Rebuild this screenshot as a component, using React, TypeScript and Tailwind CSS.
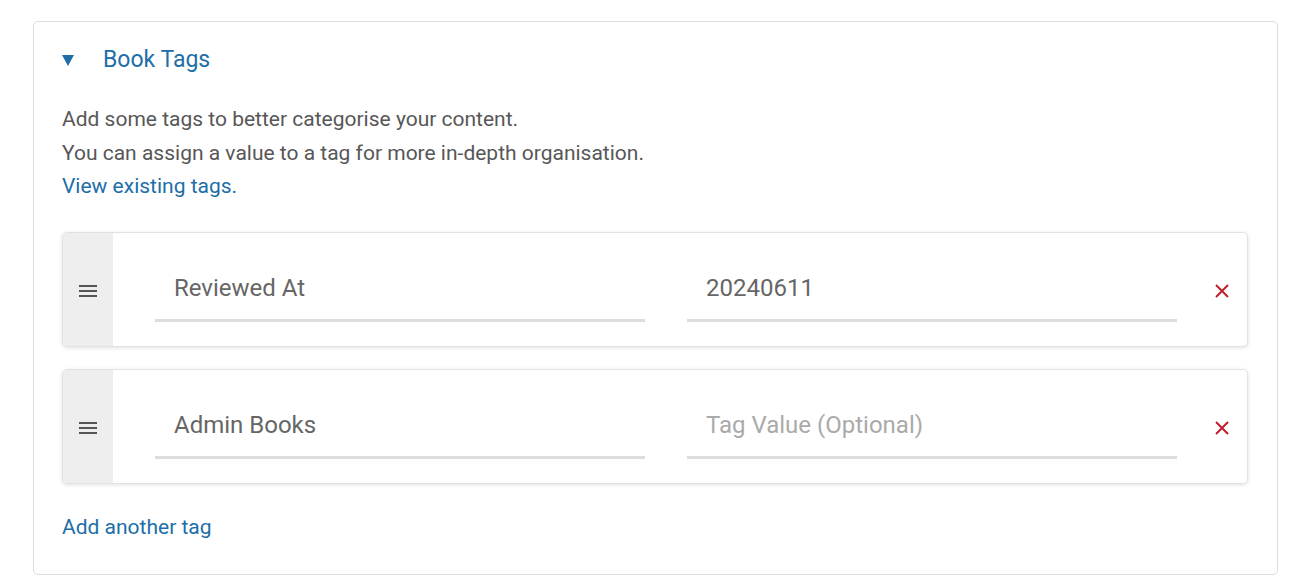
const tags = [
  { name: 'Reviewed At', value: '20240611' },
  { name: 'Admin Books', value: '' },
]

function DragHandle() {
  return (
    <svg width="18" height="12" viewBox="0 0 18 12" className="text-[#555]" aria-hidden>
      <rect x="0" y="0" width="18" height="2" fill="currentColor" />
      <rect x="0" y="5" width="18" height="2" fill="currentColor" />
      <rect x="0" y="10" width="18" height="2" fill="currentColor" />
    </svg>
  )
}

function RemoveIcon() {
  return (
    <svg width="14" height="14" viewBox="0 0 14 14" aria-hidden>
      <path d="M1 1 L13 13 M13 1 L1 13" stroke="#c0202a" strokeWidth="2" />
    </svg>
  )
}

function TagRow({ name, value }: { name: string; value: string }) {
  return (
    <div className="flex h-[115px] overflow-hidden rounded-[5px] border border-[#e2e2e2] bg-white shadow-[0_1px_4px_rgba(0,0,0,0.12)]">
      <div className="flex w-[50px] shrink-0 items-center justify-center bg-[#eeeeee] pt-[4px]">
        <DragHandle />
      </div>
      <div className="flex flex-1 items-start gap-[42px] pl-[42px] pr-[70px] pt-[37px]">
        <div className="flex-1 border-b-[3px] border-[#dddddd] pb-[13px] pl-[19px] text-[24px] leading-[36px] text-[#666]">
          {name}
        </div>
        <div className={`flex-1 border-b-[3px] border-[#dddddd] pb-[13px] pl-[19px] text-[24px] leading-[36px] ${value ? 'text-[#666]' : 'text-[#aaa]'}`}>
          {value || 'Tag Value (Optional)'}
        </div>
      </div>
    </div>
  )
}

export default function App() {
  return (
    <div className="min-h-[588px] bg-white pl-[33px] pt-[21px] font-['Roboto',sans-serif]">
      <div className="w-[1245px] rounded-[5px] border border-[#dcdcdc] pb-[31px] pl-[28px] pr-[29px] pt-[21px]">
        <div className="flex items-center text-[23px] leading-[34px] text-[#206ea7]">
          <span className="flex w-[41px]">
            <svg width="12" height="11" viewBox="0 0 12 11" aria-hidden>
              <path d="M0 0 H12 L6 11 Z" fill="#206ea7" />
            </svg>
          </span>
          <span>Book Tags</span>
        </div>

        <div className="mt-[26px] text-[21px] leading-[33.5px] text-[#575757]">
          <p>Add some tags to better categorise your content.</p>
          <p>You can assign a value to a tag for more in-depth organisation.</p>
          <a href="#" className="text-[#206ea7]">View existing tags.</a>
        </div>

        <div className="mt-[28px] flex flex-col gap-[22px]">
          {tags.map((tag) => (
            <div key={tag.name} className="relative">
              <TagRow name={tag.name} value={tag.value} />
              <div className="absolute right-[19px] top-[52px]">
                <RemoveIcon />
              </div>
            </div>
          ))}
        </div>

        <a href="#" className="mt-[27px] block text-[21px] leading-[32px] text-[#206ea7]">Add another tag</a>
      </div>
    </div>
  )
}
